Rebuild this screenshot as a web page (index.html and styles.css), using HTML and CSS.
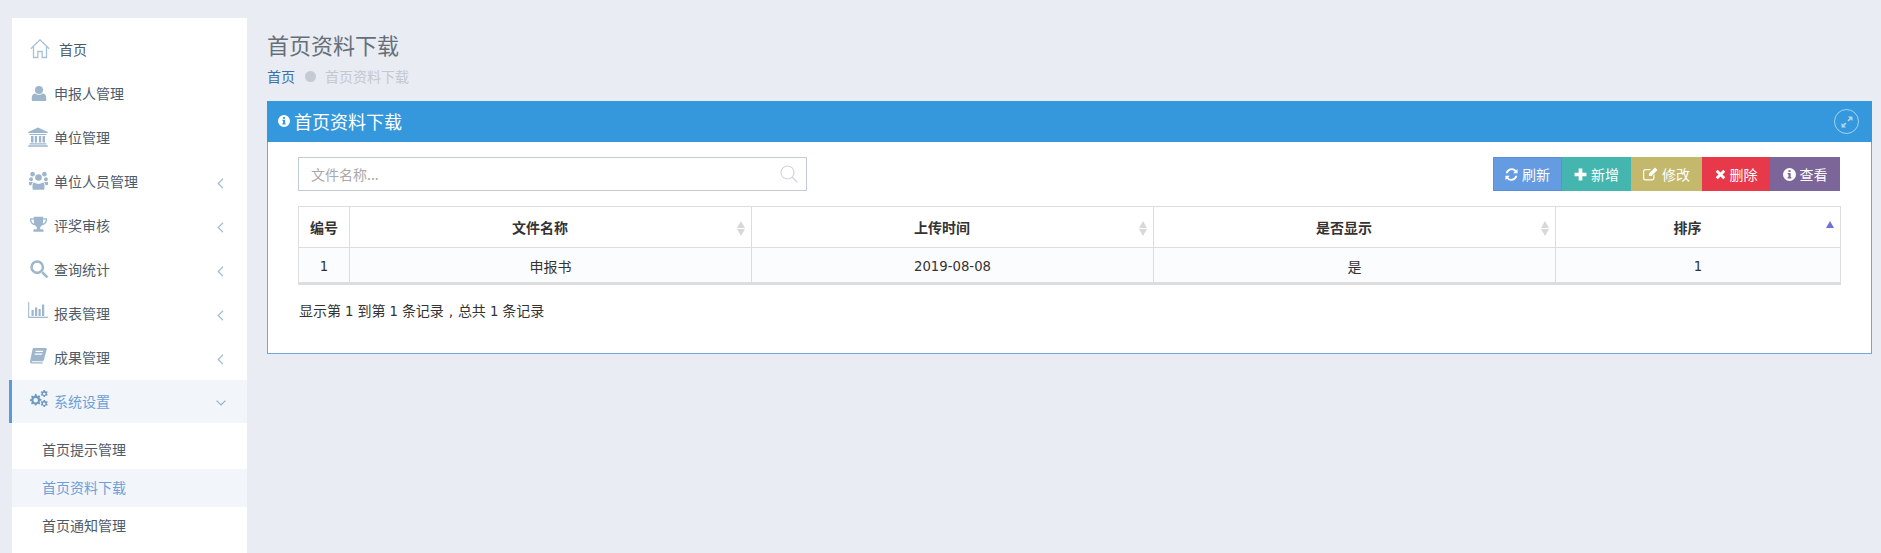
FILE: index.html
```html
<!DOCTYPE html>
<html lang="zh-CN">
<head>
<meta charset="utf-8">
<title>首页资料下载</title>
<link rel="stylesheet" href="styles.css">
</head>
<body>
<svg class="defs" aria-hidden="true">
  <symbol id="i-home" viewBox="0 0 20 20"><path d="M.8 9.8 10 .9l9.200 8.900M3.500 8v10.500h4.300v-6h4.400v6h4.300V8" fill="none" stroke="currentColor" stroke-width="1.300"/></symbol>
  <symbol id="i-user" viewBox="0 0 20 20"><circle cx="10" cy="5.500" r="5"/><path d="M2.500 19.500a1.500 1.500 0 0 1-1.500-1.500v-3c0-3 1.700-4.800 4.300-5 1.200 1 2.900 1.600 4.700 1.600s3.500-.6 4.700-1.600c2.600.2 4.300 2 4.300 5v3a1.500 1.500 0 0 1-1.500 1.500z"/></symbol>
  <symbol id="i-bank" viewBox="0 0 20 20"><path d="M10 .5 19.800 5v1H.2V5zM1.500 7h17v1h-17zM3 9h2.500v6.500H3zM6.800 9h2.300v6.500H6.800zM10.900 9h2.300v6.500h-2.300zM14.500 9H17v6.500h-2.500zM1.500 16.300h17v1.200h-17zM.2 18.300h19.600v1.400H.2z"/></symbol>
  <symbol id="i-group" viewBox="0 0 20 20"><circle cx="3.800" cy="3.300" r="2.400"/><circle cx="16.200" cy="3.300" r="2.400"/><circle cx="10" cy="6.800" r="3.500"/><circle cx="2.200" cy="8.700" r="2"/><circle cx="17.800" cy="8.700" r="2"/><path d="M5.500 12.200c1 .8 2.800 1.500 4.500 1.500s3.500-.7 4.500-1.500c1.300.3 1.800 1.500 1.800 3v3.300c0 .8-.7 1.300-1.500 1.300H5.200c-.8 0-1.500-.5-1.500-1.300v-3.300c0-1.500.5-2.700 1.800-3zM0 11.500h3.500l.8.400c-1 .7-1.600 1.700-1.600 3H1c-.6 0-1-.4-1-1zM20 11.500h-3.500l-.8.400c1 .7 1.600 1.700 1.600 3H19c.6 0 1-.4 1-1z"/></symbol>
  <symbol id="i-trophy" viewBox="0 0 20 20"><path d="M4.500 1h11v1.500H20V5c0 3-2.500 5.500-5.700 6-.7.9-1.400 1.500-2.300 1.900v2.600h2.500c1 0 1.500.7 1.500 1.500v1.500H4V17c0-.8.500-1.500 1.500-1.500H8v-2.600c-.9-.4-1.600-1-2.300-1.900C2.500 10.500 0 8 0 5V2.500h4.500zM1.600 4v1c0 1.800 1.300 3.300 3.300 4-.3-1.400-.4-3-.4-5zm16.800 0h-2.900c0 2-.1 3.600-.4 5 2-.7 3.300-2.200 3.300-4z"/></symbol>
  <symbol id="i-search" viewBox="0 0 20 20"><circle cx="8" cy="8" r="6.300" fill="none" stroke="currentColor" stroke-width="2.800"/><path d="M12.500 14.500l2-2 5 5a1.400 1.400 0 0 1-2 2z"/></symbol>
  <symbol id="i-bars" viewBox="0 0 20 16"><path d="M.2 0h1v14.800h18.600V16H.2zM3.500 8h2.200v6H3.500zM7 5.500h2.200V14H7zM10.500 7h2.200v7h-2.200zM14 2.500h2.200V14H14z"/></symbol>
  <symbol id="i-book" viewBox="0 0 18 17"><path d="M4 .5h12.500c1 0 1.500.7 1.200 1.700l-3 11c-.3 1-1 1.500-2 1.500H2.500c-.7 0-1 .7-.6 1h11.600v1.300H2c-1.300 0-2-.8-2-2 0-.5.100-.9.200-1.300L2.700 2C3 1 3.300.5 4 .5zM6 3.500l-.4 1.300h8l.4-1.300zM5.200 6.300l-.4 1.300h8l.4-1.300z" fill-rule="evenodd"/></symbol>
  <symbol id="i-cogs" viewBox="0 0 20 18"><path d="M6.300 4l1.500.3.400 1.500 1.300.5 1.300-.8 1.100 1.100-.8 1.300.5 1.300 1.500.4v1.600l-1.500.4-.5 1.300.8 1.300-1.100 1.100-1.300-.8-1.300.5-.4 1.500H6.200l-.4-1.500-1.300-.5-1.300.8-1.100-1.100.8-1.300-.5-1.300L.9 11.600V10l1.500-.4.500-1.300-.8-1.300 1.100-1.100 1.300.8 1.300-.5.400-1.500zM7 8.400a2.400 2.400 0 1 0 0 4.800 2.400 2.400 0 0 0 0-4.800z" fill-rule="evenodd"/><path d="M15.300 0h1.500l.3 1.200 1 .5 1-.5.700 1.200-.9.800v1l.9.800-.7 1.200-1-.5-1 .5-.3 1.200h-1.500l-.2-1.200-1-.5-1 .5-.8-1.200.9-.8v-1l-.9-.8.800-1.200 1 .5 1-.5zM16 2.800a1.300 1.300 0 1 0 0 2.600 1.300 1.300 0 0 0 0-2.600zM15.300 10.500h1.500l.3 1.200 1 .5 1-.5.700 1.200-.9.800v1l.9.800-.7 1.200-1-.5-1 .5-.3 1.200h-1.500l-.2-1.200-1-.5-1 .5-.8-1.200.9-.8v-1l-.9-.8.800-1.200 1 .5 1-.5zM16 13.300a1.300 1.300 0 1 0 0 2.600 1.300 1.300 0 0 0 0-2.600z" fill-rule="evenodd"/></symbol>
  <symbol id="i-info" viewBox="0 0 14 14"><path d="M7 0a7 7 0 1 1 0 14A7 7 0 0 1 7 0zM5.800 2.300v2h2.400v-2zM5 5.500v1.300h.9v3H5v1.400h4V9.800h-.8V5.500z" fill-rule="evenodd"/></symbol>
  <symbol id="i-refresh" viewBox="0 0 14 14"><path d="M13.500 1v4.700H8.800l1.800-1.800A4.300 4.300 0 0 0 3 5.600H.8A6.500 6.500 0 0 1 12 2.400zM.5 13V8.300h4.700l-1.800 1.800A4.300 4.300 0 0 0 11 8.400h2.200A6.500 6.500 0 0 1 2 11.600z"/></symbol>
  <symbol id="i-plus" viewBox="0 0 12 12"><path d="M4.300.5h3.400v3.800h3.800v3.400H7.700v3.800H4.300V7.700H.5V4.300h3.800z"/></symbol>
  <symbol id="i-edit" viewBox="0 0 15 14"><path d="M2.500 2H8L6.800 3.200H2.500c-.7 0-1.300.6-1.300 1.300v6.500c0 .7.600 1.300 1.300 1.300H9c.7 0 1.300-.6 1.300-1.300V8.200l1.200-1.200V11c0 1.400-1.100 2.500-2.500 2.500H2.500A2.500 2.500 0 0 1 0 11V4.500C0 3.100 1.100 2 2.500 2zM12 .5 14.500 3 8.500 9H6V6.500z"/></symbol>
  <symbol id="i-times" viewBox="0 0 12 12"><path d="M3 .8 6 3.800 9 .8 11.200 3 8.200 6l3 3L9 11.200l-3-3-3 3L.8 9l3-3-3-3z"/></symbol>
  <symbol id="i-expand" viewBox="0 0 12 12"><path d="M7 .5h4.500V5L9.800 3.400 7.600 5.600 6.400 4.400l2.200-2.200zM5 11.500H.5V7l1.700 1.600 2.200-2.200 1.200 1.200-2.200 2.200z"/></symbol>
  <symbol id="i-lens" viewBox="0 0 18 18"><circle cx="7.500" cy="7.500" r="6.500" fill="none" stroke="currentColor" stroke-width="1.200"/><path d="M12 12l5.200 5.200" fill="none" stroke="currentColor" stroke-width="1.400"/></symbol>
  <symbol id="i-left" viewBox="0 0 7 11"><path d="M6 .8 1.200 5.500 6 10.200" fill="none" stroke="currentColor" stroke-width="1.200"/></symbol>
  <symbol id="i-down" viewBox="0 0 10 6"><path d="M.6.6 5 5 9.400.6" fill="none" stroke="currentColor" stroke-width="1.200"/></symbol>
</svg>

<div class="shell">
  <nav class="sidebar">
    <ul class="menu">
      <li class="item item-home"><svg class="ico ico-home"><use href="#i-home"/></svg><span>首页</span></li>
      <li class="item"><svg class="ico ico-user"><use href="#i-user"/></svg><span>申报人管理</span></li>
      <li class="item"><svg class="ico"><use href="#i-bank"/></svg><span>单位管理</span></li>
      <li class="item"><svg class="ico ico-group"><use href="#i-group"/></svg><span>单位人员管理</span><svg class="arrow"><use href="#i-left"/></svg></li>
      <li class="item"><svg class="ico ico-trophy"><use href="#i-trophy"/></svg><span>评奖审核</span><svg class="arrow"><use href="#i-left"/></svg></li>
      <li class="item"><svg class="ico ico-search"><use href="#i-search"/></svg><span>查询统计</span><svg class="arrow"><use href="#i-left"/></svg></li>
      <li class="item"><svg class="ico ico-bars"><use href="#i-bars"/></svg><span>报表管理</span><svg class="arrow"><use href="#i-left"/></svg></li>
      <li class="item"><svg class="ico ico-book"><use href="#i-book"/></svg><span>成果管理</span><svg class="arrow"><use href="#i-left"/></svg></li>
      <li class="item item-open"><svg class="ico ico-cogs"><use href="#i-cogs"/></svg><span>系统设置</span><svg class="arrow-down"><use href="#i-down"/></svg></li>
    </ul>
    <ul class="submenu">
      <li class="subitem">首页提示管理</li>
      <li class="subitem subitem-active">首页资料下载</li>
      <li class="subitem">首页通知管理</li>
    </ul>
  </nav>

  <main class="content">
    <h1 class="page-title">首页资料下载</h1>
    <div class="crumbs"><a class="crumb-link">首页</a><i class="crumb-dot"></i><span class="crumb-current">首页资料下载</span></div>

    <section class="portlet">
      <header class="portlet-head">
        <svg class="head-info"><use href="#i-info"/></svg>
        <h2 class="portlet-title">首页资料下载</h2>
        <span class="expand"><svg class="expand-ico"><use href="#i-expand"/></svg></span>
      </header>
      <div class="portlet-body">
        <div class="toolbar">
          <div class="search">
            <span class="search-hint">文件名称...</span>
            <svg class="search-ico"><use href="#i-lens"/></svg>
          </div>
          <div class="btns">
            <button class="btn btn-refresh"><svg class="btn-ico"><use href="#i-refresh"/></svg>刷新</button>
            <button class="btn btn-add"><svg class="btn-ico"><use href="#i-plus"/></svg>新增</button>
            <button class="btn btn-edit"><svg class="btn-ico btn-ico-wide"><use href="#i-edit"/></svg>修改</button>
            <button class="btn btn-del"><svg class="btn-ico btn-ico-sm"><use href="#i-times"/></svg>删除</button>
            <button class="btn btn-view"><svg class="btn-ico"><use href="#i-info"/></svg>查看</button>
          </div>
        </div>
        <table class="grid">
          <colgroup><col class="c1"><col class="c2"><col class="c3"><col class="c4"><col class="c5"></colgroup>
          <thead>
            <tr>
              <th>编号</th>
              <th class="sortable">文件名称<span class="sort"></span></th>
              <th class="sortable">上传时间<span class="sort"></span></th>
              <th class="sortable">是否显示<span class="sort"></span></th>
              <th class="sortable">排序<span class="sort-asc"></span></th>
            </tr>
          </thead>
          <tbody>
            <tr><td><span class="num">1</span></td><td>申报书</td><td><span class="num">2019-08-08</span></td><td>是</td><td><span class="num">1</span></td></tr>
          </tbody>
        </table>
        <p class="summary">显示第<span class="num gap">1</span>到第<span class="num gap">1</span>条记录<span class="comma">,</span>总共<span class="num gap">1</span>条记录</p>
      </div>
    </section>
  </main>
</div>
</body>
</html>
```
FILE: styles.css
```css
* { box-sizing: border-box; }
html, body { margin: 0; height: 100%; }
body {
  background: #e9ecf3;
  color: #333;
  font: 14px/20px "Noto Sans CJK SC", "Liberation Sans", sans-serif;
  overflow: hidden;
}
ul { list-style: none; margin: 0; padding: 0; }
.defs { position: absolute; width: 0; height: 0; }
.defs symbol { fill: currentColor; }
svg { fill: currentColor; display: block; flex: none; }

.shell { display: flex; height: 553px; padding: 18px 9px 0 12px; }

.sidebar { width: 235px; flex: none; background: #fff; padding-top: 10px; }
.item {
  display: flex; align-items: center; height: 44px;
  margin-left: -3px; padding: 0 0 2px 16px;
  border-left: 3px solid transparent;
  color: #4d5b69;
}
.item span { margin-left: 6px; }
.ico { width: 20px; height: 20px; color: #9db6cb; }
.ico-home { width: 20px; height: 20px; margin-left: 2px; color: #a9c1d4; }
.item-home span { margin-left: 9px; }
.ico-user { width: 16px; height: 17px; margin: 0 1px 0 3px; }
.ico-group { width: 19px; height: 19px; margin: -1px 0 0 1px; }
.ico-trophy { width: 17px; height: 17px; margin: -1px 1px 0 2px; }
.ico-search { width: 18px; height: 18px; margin: 0 0 0 2px; }
.ico-bars { height: 16px; margin-top: -6px; }
.ico-book { width: 17px; height: 17px; margin: -4px 1px 0 2px; }
.ico-cogs { width: 19px; height: 17px; margin: -4px 0 0 1px; color: #6f9ac2; }
.arrow { width: 7px; height: 11px; margin-left: auto; margin-right: 23px; margin-top: 5px; color: #a5bdd0; }
.arrow-down { width: 10px; height: 6px; margin-left: auto; margin-right: 21px; margin-top: 5px; color: #8fb0d0; }
.item-open { background: #f2f5f9; border-left-color: #5b9bd5; color: #6ba0d8; height: 43px; }
.submenu { padding-top: 8px; }
.subitem { height: 38px; padding: 0 0 2px 30px; display: flex; align-items: center; color: #4d5b69; }
.subitem-active { background: #f2f5f9; color: #6ba0d8; }

.content { flex: 1; min-width: 0; margin-left: 20px; }
.page-title { margin: 11px 0 0; font-size: 22px; font-weight: 400; line-height: 30px; color: #666f78; }
.crumbs { display: flex; align-items: center; height: 20px; margin-top: 7px; }
.crumb-link { color: #3f6fa8; }
.crumb-dot { width: 11px; height: 11px; border-radius: 50%; background: #c5cbd5; margin: 0 9px 0 10px; }
.crumb-current { color: #c4c8ce; }

.portlet { margin-top: 15px; height: 253px; border: 1px solid #5dade2; border-top: 0; background: #fff; border-bottom-color: #6fa8dc; }
.portlet-head { display: flex; align-items: center; height: 41px; background: #3598dc; color: #fff; margin: 0 -1px; padding: 0 13px 2px 11px; }
.head-info { width: 12px; height: 12px; margin-right: 4px; }
.portlet-title { margin: 0; font-size: 18px; font-weight: 400; line-height: 24px; }
.expand { width: 25px; height: 25px; border: 1px solid rgba(255,255,255,.55); border-radius: 50%; margin-left: auto; margin-top: 2px; display: flex; align-items: center; justify-content: center; color: rgba(255,255,255,.6); }
.expand-ico { width: 12px; height: 12px; }

.portlet-body { padding: 15px 31px 0 30px; }
.toolbar { display: flex; justify-content: space-between; height: 34px; }
.search { width: 509px; height: 34px; border: 1px solid #c2cad8; display: flex; align-items: center; justify-content: space-between; padding: 0 8px 0 12px; }
.search-hint { color: #a9a9a9; font-size: 14px; }
.search-ico { width: 18px; height: 18px; color: #d4d6d8; }
.btns { display: flex; }
.btn { height: 34px; border: 0; padding: 0; display: flex; align-items: center; justify-content: center; gap: 4px; color: #fff; font: inherit; }
.btn-ico { width: 13px; height: 13px; }
.btn-ico-wide { width: 15px; height: 14px; }
.btn-ico-sm { width: 11px; height: 11px; }
.btn-refresh { width: 69px; background: #659be0; border: 1px solid #5a8fdc; }
.btn-add { width: 69px; background: #45b6af; }
.btn-edit { width: 71px; background: #c4b86d; }
.btn-del { width: 68px; background: #e7394a; }
.btn-view { width: 70px; background: #7c6598; }

.grid { width: 1542px; margin-top: 15px; border-collapse: collapse; table-layout: fixed; border: 1px solid #ddd; border-bottom: 3px solid #ddd; }
.c1 { width: 51px; } .c2 { width: 402px; } .c3 { width: 402px; } .c4 { width: 402px; } .c5 { width: 285px; }
.grid th, .grid td { border: 1px solid #ddd; text-align: center; padding: 0; }
.grid th { height: 41px; background: #fff; font-weight: 700; position: relative; color: #333; }
.grid td { height: 36px; padding-top: 1px; background: #fbfcfe; }
.grid th.sortable { padding-right: 21px; }
.sort, .sort-asc { position: absolute; right: 6px; top: 14px; width: 8px; height: 15px; }
.sort::before, .sort::after, .sort-asc::before { content: ""; position: absolute; left: 0; border-left: 4px solid transparent; border-right: 4px solid transparent; }
.sort::before { top: 0; border-bottom: 7px solid #d8d8d8; }
.sort::after { bottom: 0; border-top: 7px solid #d8d8d8; }
.sort-asc::before { top: 0; border-bottom: 7px solid #7070d8; }
.num { font-family: "DejaVu Sans", sans-serif; font-size: 13.250px; }
.gap { margin: 0 4px; }
.comma { display: inline-block; width: 14px; text-align: center; font-family: "DejaVu Sans", sans-serif; }
.summary { margin: 15px 0 0 1px; }
```
